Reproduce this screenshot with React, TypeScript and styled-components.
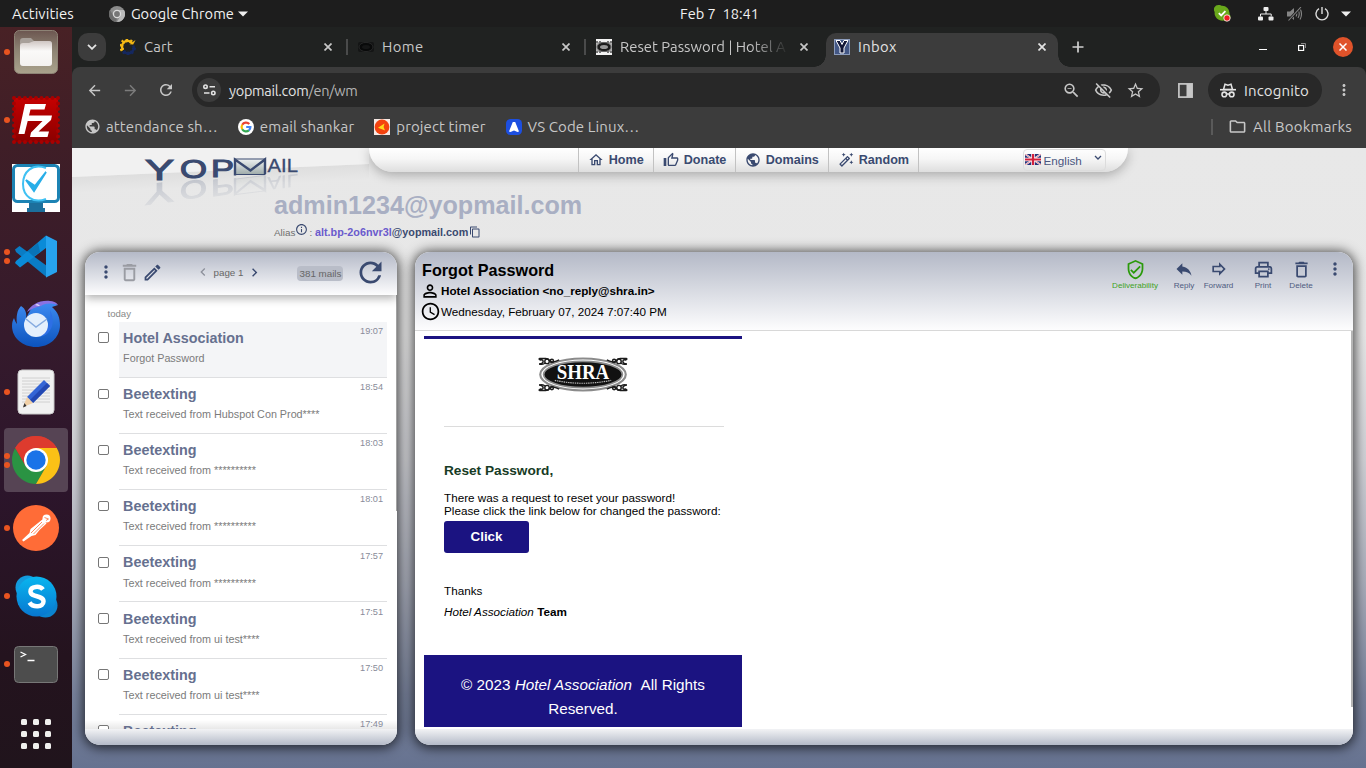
import React from "react";
import styled, { createGlobalStyle, css } from "styled-components";
import {
  MdAccessTime, MdArrowBack, MdArrowForward, MdChevronLeft, MdChevronRight, MdContentCopy,
  MdDeleteOutline, MdInfoOutline, MdMoreVert, MdOutlineAutoFixHigh, MdOutlineEdit,
  MdOutlineFolder, MdOutlineForward, MdOutlineHome, MdOutlinePrint, MdOutlineThumbUp,
  MdOutlineVerifiedUser, MdOutlineVisibilityOff, MdPersonOutline, MdPublic, MdRefresh,
  MdReply, MdStarBorder, MdZoomOut,
} from "react-icons/md";

const NAVY = "#3a4a70";
const SHELL_FONT = `Ubuntu, "Noto Sans", "Open Sans", sans-serif`;
const WEB_FONT = `"Liberation Sans", Arial, sans-serif`;

const GlobalStyle = createGlobalStyle`
  * { box-sizing: border-box; }
  body { margin: 0; overflow: hidden; background: #1d1d1d; }
  svg { display: block; flex: none; }
`;

const Desktop = styled.div`
  width: 1366px;
  height: 768px;
  display: flex;
  flex-direction: column;
  overflow: hidden;
  font-family: ${SHELL_FONT};
`;

/* ---------- system bar ---------- */
const SystemBar = styled.header`
  flex: none;
  height: 27px;
  padding: 0 15px 0 12px;
  display: grid;
  grid-template-columns: 668px auto 1fr;
  align-items: center;
  background: #1d1d1d;
  color: #f2f2f2;
  line-height: 27px;
`;
const SystemLeft = styled.div`
  display: flex;
  align-items: center;
`;
const SystemRight = styled.div`
  display: flex;
  align-items: center;
  justify-content: flex-end;
`;
const ShellText = styled.span<{ $track?: number; $left?: number; $size?: number; $color?: string }>`
  white-space: pre;
  font-size: ${(p) => p.$size ?? 15}px;
  letter-spacing: ${(p) => p.$track ?? 0}px;
  margin-left: ${(p) => p.$left ?? 0}px;
  color: ${(p) => p.$color ?? "inherit"};
`;
const Glyph = styled.span<{ $left?: number; $color?: string }>`
  display: flex;
  flex: none;
  margin-left: ${(p) => p.$left ?? 0}px;
  color: ${(p) => p.$color ?? "inherit"};
`;

/* ---------- dock ---------- */
const Workspace = styled.div`
  flex: 1;
  min-height: 0;
  display: flex;
`;
const Dock = styled.aside`
  width: 72px;
  flex: none;
  display: flex;
  flex-direction: column;
  overflow: hidden;
  background: linear-gradient(180deg, #482125 0%, #3f1e27 16%, #351a2c 42%, #2c152b 62%, #24131e 85%, #20141c 100%);
`;
const DockSlot = styled.div<{ $first?: boolean; $last?: boolean }>`
  height: 68px;
  flex: none;
  padding: 2px 4px;
  display: flex;
  margin-top: ${(p) => (p.$first ? "-9px" : p.$last ? "auto" : "0")};
`;
const DockTile = styled.div<{ $active?: boolean }>`
  position: relative;
  width: 64px;
  height: 64px;
  border-radius: 4px;
  display: flex;
  align-items: center;
  justify-content: center;
  background: ${(p) => (p.$active ? "#564454" : "transparent")};
`;
const RunDots = styled.div`
  position: absolute;
  left: 0;
  top: 0;
  height: 100%;
  display: flex;
  flex-direction: column;
  justify-content: center;
  gap: 3px;
  i { width: 6px; height: 6px; border-radius: 50%; background: #e95420; }
`;

/* ---------- browser ---------- */
const Browser = styled.section`
  flex: 1;
  min-width: 0;
  display: flex;
  flex-direction: column;
  background: #202221;
`;
const TabStrip = styled.div`
  height: 40px;
  flex: none;
  display: flex;
  align-items: center;
  padding-left: 6px;
  background: #202221;
  color: #c7c7c7;
`;
const TabSearch = styled.div`
  width: 28px;
  height: 28px;
  border-radius: 10px;
  background: #3c3c3c;
  display: flex;
  align-items: center;
  justify-content: center;
`;
const TabBox = styled.div<{ $active?: boolean; $rule?: boolean }>`
  position: relative;
  display: flex;
  align-items: center;
  height: 34px;
  align-self: flex-end;
  padding-bottom: 6px;
  width: 238px;
  padding-left: 10px;
  ${(p) => p.$rule && css`
    background: linear-gradient(#4a4b4b, #4a4b4b) 236px 6px / 2px 16px no-repeat;
  `}
  ${(p) => p.$active && css`
    width: 232px;
    padding-left: 8px;
    background: #3c3c3c;
    border-radius: 10px 10px 0 0;
    color: #e3e3e3;
    &::before, &::after {
      content: "";
      position: absolute;
      bottom: 0;
      width: 12px;
      height: 12px;
    }
    &::before { left: -12px; background: radial-gradient(circle at 0 0, transparent 11.5px, #3c3c3c 12px); }
    &::after { right: -12px; background: radial-gradient(circle at 100% 0, transparent 11.5px, #3c3c3c 12px); }
  `}
`;
const TabTitle = styled.span<{ $fade?: boolean; $track?: number }>`
  width: 167px;
  margin-left: 8px;
  margin-bottom: 1px;
  overflow: hidden;
  white-space: nowrap;
  font-size: 14.8px;
  letter-spacing: ${(p) => p.$track ?? 0}px;
  ${(p) => p.$fade && css`
    -webkit-mask-image: linear-gradient(90deg, #000 130px, transparent 169px);
    mask-image: linear-gradient(90deg, #000 130px, transparent 169px);
  `}
`;
const WindowButtons = styled.div`
  margin-left: auto;
  padding-right: 13px;
  display: flex;
  align-items: center;
`;
const CloseWindow = styled.div`
  width: 20px;
  height: 20px;
  margin-left: 27px;
  border-radius: 50%;
  background: #e0532a;
  display: flex;
  align-items: center;
  justify-content: center;
`;
const Chrome = styled.div`
  background: #3c3c3c;
  border-radius: 8px 8px 0 0;
  color: #c7c7c7;
  flex: none;
`;
const Toolbar = styled.div`
  height: 46px;
  padding: 0 0 0 14px;
  display: flex;
  align-items: center;
`;
const Omnibox = styled.div`
  width: 968px;
  height: 34px;
  flex: none;
  margin-left: 17px;
  padding: 0 15px 0 5px;
  border-radius: 17px;
  background: #282828;
  display: flex;
  align-items: center;
`;
const SiteInfo = styled.div`
  width: 24px;
  height: 24px;
  border-radius: 50%;
  background: #3c3c3c;
  display: flex;
  align-items: center;
  justify-content: center;
`;
const OmniActions = styled.div`
  margin-left: auto;
  display: flex;
  align-items: center;
  gap: 13px;
`;
const Incognito = styled.div`
  width: 114px;
  height: 34px;
  flex: none;
  margin-left: 15px;
  padding-left: 12px;
  border-radius: 17px;
  background: #282828;
  color: #e3e3e3;
  display: flex;
  align-items: center;
`;
const Bookmarks = styled.div`
  height: 35px;
  padding: 0 14px 8px 12px;
  display: flex;
  align-items: center;
`;
const BookmarkRule = styled.div`
  width: 2px;
  height: 16px;
  margin-left: auto;
  background: #5a5a5a;
`;

/* ---------- mail page ---------- */
const Page = styled.main`
  position: relative;
  flex: 1;
  min-height: 0;
  overflow: hidden;
  display: flex;
  flex-direction: column;
  font-family: ${WEB_FONT};
  color: #000;
  background: linear-gradient(180deg, #e8e8e8 0%, #e7e7e7 30%, #d0d1d6 50%, #a9adba 70%, #78829b 88%, #667290 100%);
`;
const Sheen = styled.svg`
  position: absolute;
  left: 0;
  top: 0;
`;
const Masthead = styled.div`
  position: relative;
  height: 42px;
  flex: none;
  display: flex;
  align-items: flex-start;
`;
const LogoSlot = styled.div`
  width: 297px;
  height: 42px;
  padding: 6px 0 0 72px;
`;
const Nav = styled.nav`
  width: 759px;
  height: 24px;
  padding: 0 22px 0 209px;
  display: flex;
  align-items: center;
  border-radius: 0 0 26px 26px;
  background: linear-gradient(180deg, #ffffff, #f6f6f6 45%, #dedede);
  box-shadow: 0 3px 12px rgba(0, 0, 0, 0.28);
`;
const NavItem = styled.a<{ $w: number; $last?: boolean }>`
  width: ${(p) => p.$w}px;
  height: 24px;
  display: flex;
  align-items: center;
  padding-left: 9px;
  border-left: 1px solid #c2c2c2;
  border-right: ${(p) => (p.$last ? "1px solid #c2c2c2" : "0")};
  color: ${NAVY};
  font-weight: bold;
  font-size: 12.6px;
  span { margin-left: 4.7px; }
`;
const Language = styled.div`
  width: 83px;
  height: 22px;
  margin-left: auto;
  border: 1px solid #dcdcdc;
  border-radius: 4px;
  display: flex;
  align-items: flex-start;
  padding: 4px 3px 0 1px;
  color: #4a5680;
  font-size: 11.7px;
  line-height: 14px;
  span { margin-left: 2.5px; }
  svg:last-child { margin-left: auto; margin-top: 1px; }
`;
const Account = styled.div`
  position: relative;
  height: 62px;
  flex: none;
  padding-left: 202px;
`;
const Address = styled.h1`
  margin: 0;
  font-size: 25.15px;
  line-height: 31px;
  color: #a9afc3;
`;
const AliasLine = styled.div`
  height: 18px;
  margin-top: 2px;
  display: flex;
  align-items: center;
  color: #6e6e6e;
  font-size: 9.9px;
  white-space: pre;
  b { font-size: 10.8px; color: ${NAVY}; }
  b em { font-style: normal; color: #6a5acd; }
`;
const Superscript = styled.span`
  display: flex;
  margin-right: -1.7px;
  padding-bottom: 5px;
  color: ${NAVY};
`;
const Cards = styled.div`
  position: relative;
  display: flex;
  gap: 18px;
  padding: 0 13px;
`;
const Card = styled.section<{ $w: number }>`
  width: ${(p) => p.$w}px;
  height: 493px;
  display: flex;
  flex-direction: column;
  overflow: hidden;
  border-radius: 15px;
  background: #fff;
  box-shadow: 0 1px 12px 2px rgba(0, 0, 0, 0.68);
`;
const CardFoot = styled.div`
  height: 16px;
  flex: none;
  margin-top: auto;
  background: linear-gradient(180deg, #f2f3f5, #b4bac8);
`;
const ListHead = styled.div`
  position: relative;
  height: 43px;
  flex: none;
  display: flex;
  align-items: center;
  padding: 0 0 3px 12px;
  color: ${NAVY};
  background: linear-gradient(180deg, #b4b9c7, #fdfdfe);
  box-shadow: 0 3px 9px rgba(0, 0, 0, 0.32);
`;
const HeadText = styled.span<{ $pill?: boolean }>`
  flex: none;
  margin: 1px 0 0 2.5px;
  font-size: 9.8px;
  line-height: 14px;
  color: #666;
  white-space: nowrap;
  ${(p) => p.$pill && css`
    width: 46px;
    height: 15px;
    margin: 3px 0 0 34px;
    border-radius: 4px;
    text-align: center;
    line-height: 15px;
    background: #b9bdc8;
  `}
`;
const ListBody = styled.div`
  flex: 1;
  min-height: 0;
  overflow: hidden;
  padding: 13px 10px 0 12px;
  background:
    linear-gradient(0deg, rgba(0, 0, 0, 0.09), transparent 9px),
    linear-gradient(#a2a2a2, #a2a2a2) right top / 1.5px 216px no-repeat;
`;
const DayLabel = styled.div`
  height: 13.85px;
  padding-left: 10.5px;
  font-size: 9.6px;
  line-height: 11px;
  color: #888;
`;
const MailRow = styled.div`
  height: 56.15px;
  display: flex;
`;
const Tick = styled.i`
  width: 10.5px;
  height: 10.5px;
  flex: none;
  margin: 10.6px 0 0 1px;
  border: 1px solid #767676;
  border-radius: 2px;
  background: #fff;
`;
const MailBody = styled.div<{ $selected?: boolean }>`
  width: 267.5px;
  height: 56px;
  flex: none;
  margin-left: 10.6px;
  padding: 8px 3.5px 0 4px;
  border-bottom: 1px solid #dedfe1;
  background: ${(p) => (p.$selected ? "#f4f5f7" : "transparent")};
`;
const MailTop = styled.div`
  display: flex;
  justify-content: space-between;
  b { font-size: 14.35px; line-height: 17px; color: #66708f; }
  span { font-size: 9.2px; line-height: 10px; margin-top: -3.9px; color: #888b99; }
`;
const MailSubject = styled.div`
  margin-top: 5.1px;
  font-size: 10.77px;
  line-height: 13px;
  color: #7b7b7b;
`;

const MessageHead = styled.div`
  height: 79px;
  flex: none;
  display: flex;
  justify-content: space-between;
  padding: 8px 0 0 6px;
  border-bottom: 1px solid #d8d8d8;
  background: linear-gradient(180deg, #b4b9c7, #fdfdfe);
`;
const MessageTitle = styled.h2`
  margin: 0 0 0 1px;
  font-size: 16.2px;
  line-height: 20px;
`;
const MetaLine = styled.div<{ $bold?: boolean }>`
  height: 21px;
  display: flex;
  align-items: center;
  font-size: 11.7px;
  font-weight: ${(p) => (p.$bold ? "bold" : "normal")};
  white-space: nowrap;
  svg { margin-right: ${(p) => (p.$bold ? 1 : 0)}px; margin-left: -1px; }
`;
const Actions = styled.div`
  display: flex;
`;
const Action = styled.div<{ $w: number; $green?: boolean; $end?: boolean }>`
  width: ${(p) => p.$w}px;
  height: 30px;
  padding-left: ${(p) => (p.$end ? 6 : 0)}px;
  display: flex;
  flex-direction: column;
  align-items: center;
  color: ${(p) => (p.$green ? "#2b9a0b" : NAVY)};
  font-size: 8.1px;
  div { height: 18px; display: flex; align-items: center; }
  span { margin-top: 3px; line-height: 9px; color: ${(p) => (p.$green ? "#3fa324" : "#4f5c80")}; }
`;
const MessageBody = styled.div`
  flex: 1;
  min-height: 0;
  padding: 5px 0 0 9px;
  background: linear-gradient(#b5b5b5, #b5b5b5) right top / 2px 376px no-repeat;
`;
const Letter = styled.article`
  width: 318px;
  border-top: 3px solid #1b1381;
  font-size: 11.7px;
  line-height: 13px;
`;
const LetterLogo = styled.div`
  height: 88px;
  margin: 0 18px 0 20px;
  padding: 17.5px 0 0 94px;
  border-bottom: 1px solid #dcdcdc;
`;
const LetterText = styled.div`
  height: 228px;
  padding: 36px 0 0 20px;
  white-space: nowrap;
  h3 { margin: 0; font-size: 13.65px; line-height: 16px; color: #173b25; }
  p { margin: 12px 0 0; }
`;
const ClickButton = styled.div`
  width: 85px;
  height: 32px;
  margin: 4px 0 31px;
  border-radius: 3px;
  background: #1b1381;
  color: #fff;
  font-weight: bold;
  font-size: 13.4px;
  line-height: 31px;
  text-align: center;
`;
const SignOff = styled.div`
  height: 21px;
  line-height: 14px;
`;
const LetterFoot = styled.footer`
  height: 72px;
  padding: 18px 30px 0;
  background: #1b1381;
  color: #fff;
  font-size: 15.25px;
  line-height: 24px;
  text-align: center;
  white-space: pre-line;
`;

/* ---------- drawings ---------- */
const Close = ({ size = 8, w = 1.7 }: { size?: number; w?: number }) => (
  <svg width={size} height={size} viewBox="0 0 8 8" fill="none" stroke="currentColor" strokeWidth={w}>
    <path d="M.5.5l7 7M7.5.5l-7 7" />
  </svg>
);

const ChromeMono = () => (
  <svg width="16" height="16" viewBox="0 0 16 16">
    <circle cx="8" cy="8" r="8" fill="#8b8b8b" />
    <path d="M8 4h7A8 8 0 0 1 8 16l3.4-6z" fill="#b9b9b9" />
    <path d="M1 4l3.5 6L8 12 7 16A8 8 0 0 1 1 4z" fill="#6d6d6d" />
    <circle cx="8" cy="8" r="4.2" fill="#dcdcdc" />
    <circle cx="8" cy="8" r="2.9" fill="#777" />
  </svg>
);
const Caret = () => (
  <svg width="10" height="6" viewBox="0 0 10 6"><path d="M0 .5h10L5 5.5z" fill="#eee" /></svg>
);
const SkypeStatus = () => (
  <svg width="17" height="17" viewBox="0 0 17 17">
    <path d="M4.500 0 a4.500 4.500 0 0 1 3 .7A7.500 7.500 0 0 1 15.500 9a4.500 4.500 0 0 1-6 6.500A7.500 7.500 0 0 1 .7 7 4.500 4.500 0 0 1 4.500 0z" fill="#69a81b" />
    <path d="M4.800 8.200l2.400 2.300 4.200-4.300" fill="none" stroke="#fff" strokeWidth="1.800" />
    <circle cx="13" cy="13" r="3.200" fill="#ed1c24" stroke="#fff" strokeWidth=".8" />
  </svg>
);
const Network = () => (
  <svg width="16" height="14" viewBox="0 0 16 14" fill="#eee">
    <rect x="5.500" y="0" width="5" height="4" rx="1" /><rect x="0" y="9.500" width="5" height="4" rx="1" />
    <rect x="10.500" y="9.500" width="5" height="4" rx="1" />
    <path d="M8 4v3M2.500 9.500V7h10.700v2.500" fill="none" stroke="#eee" />
  </svg>
);
const Muted = () => (
  <svg width="15" height="14" viewBox="0 0 15 14" fill="none" stroke="#858585" strokeWidth="1.100">
    <path d="M0 4.500h3L7 1v12L3 9.500H0z" fill="#858585" stroke="none" />
    <path d="M9 4.500q1.500 2.500 0 5M11 3q2.500 4 0 8M13 1.500q3 5.500 0 11" />
    <path d="M14 0L1 14" stroke="#1d1d1d" strokeWidth="2.600" /><path d="M14 0L1.500 13.500" />
  </svg>
);
const Power = () => (
  <svg width="14" height="14" viewBox="0 0 14 14" fill="none" stroke="#ddd" strokeWidth="1.400">
    <path d="M4 1.700a6 6 0 1 0 6 0M7 0v7" />
  </svg>
);

const CartIcon = () => (
  <svg width="16" height="16" viewBox="0 0 16 16" fill="none">
    <path d="M12 4A5.600 5.600 0 0 0 3.200 11" stroke="#f5b915" strokeWidth="2.400" />
    <path d="M11.500 3.200A5.900 5.900 0 0 0 2.800 11.500" stroke="#f5b915" strokeWidth="4" strokeDasharray="2 2" />
    <path d="M3.500 12A5.600 5.600 0 0 0 13.200 6.500" stroke="#15285f" strokeWidth="2.600" />
    <path d="M3.500 12.500A6 6 0 0 0 13.800 7" stroke="#15285f" strokeWidth="4" strokeDasharray="2 2" />
    <path d="M9.500 5.200L15.500 1l-2.300 4.500z" fill="#f5b915" />
  </svg>
);
const Crest = ({ light }: { light?: boolean }) => (
  <svg width="16" height="16" viewBox="0 0 16 16">
    {light && <rect width="16" height="16" fill="#f4f4f4" />}
    <rect x="0" y="3" width="16" height="10" rx="2" fill={light ? "#aaa" : "#141515"} />
    {light && <path d="M0 3h5M16 3h-5M0 13h5M16 13h-5" stroke="#777" strokeWidth="2" strokeDasharray="2 1" />}
    <ellipse cx="8" cy="8" rx="7" ry="4.600" fill={light ? "#1c1c1c" : "#090a0a"} stroke={light ? "#666" : "#262727"} />
    <ellipse cx="8" cy="8" rx="4" ry="2" fill={light ? "#999" : "#151616"} />
  </svg>
);
const InboxIcon = () => (
  <svg width="16" height="16" viewBox="0 0 16 16">
    <rect width="16" height="16" fill="#8c9cbc" /><rect x="1" y="1" width="14" height="14" fill="#435785" />
    <path d="M2 1.500h4l2 4 2-4h4L10 9v5H6V9z" fill="#121737" stroke="#fff" strokeWidth="1" />
  </svg>
);
const Tune = () => (
  <svg width="13" height="12" viewBox="0 0 13 12" fill="none" stroke="#e3e3e3" strokeWidth="1.600">
    <circle cx="2.500" cy="2.700" r="1.700" /><path d="M6.500 2.700H12M1 9h5.500" /><circle cx="10.300" cy="9" r="1.700" />
  </svg>
);
const SidePanel = () => (
  <svg width="15" height="15" viewBox="0 0 15 15">
    <rect x=".9" y=".9" width="13.200" height="13.200" fill="none" stroke="#c7c7c7" strokeWidth="1.700" />
    <rect x="8.500" y="1" width="5.500" height="13" fill="#c7c7c7" />
  </svg>
);
const Spy = () => (
  <svg width="16" height="15" viewBox="0 0 16 15" fill="none" stroke="#e3e3e3" strokeWidth="1.600">
    <path d="M0 6.700h16" /><path d="M3.500 6.500L5 1.300l3 .9 3-.9 1.500 5.200z" strokeWidth="1.500" />
    <circle cx="4.300" cy="11.400" r="2.300" /><circle cx="11.700" cy="11.400" r="2.300" /><path d="M6.500 11h3" />
  </svg>
);
const GoogleMark = () => (
  <svg width="16" height="16" viewBox="0 0 16 16" fill="none" strokeWidth="2.200">
    <circle cx="8" cy="8" r="8" fill="#fff" />
    <path d="M11.300 5A4.400 4.400 0 0 0 4.200 5.800" stroke="#ea4335" /><path d="M4.200 5.800a4.400 4.400 0 0 0 0 4.400" stroke="#fbbc05" />
    <path d="M4.200 10.200a4.400 4.400 0 0 0 6.700 1.100" stroke="#34a853" /><path d="M10.900 11.300A4.300 4.300 0 0 0 12.400 8H8.200" stroke="#4285f4" />
  </svg>
);
const TimerMark = () => (
  <svg width="16" height="16" viewBox="0 0 16 16">
    <rect width="16" height="16" fill="#f6e9e4" /><circle cx="8" cy="8" r="7.400" fill="#f4430f" />
    <path d="M4 8.800L10.500 4.500 9.600 8l1.400 3.500-3-1.200z" fill="#ffd91a" />
  </svg>
);
const VsMark = () => (
  <svg width="16" height="16" viewBox="0 0 16 16">
    <rect width="16" height="16" rx="4.500" fill="#1d4fe0" />
    <path d="M6.800 3h2.400L13 12.500l-1.500.6L8 11.500l-3.500 1.600-1.500-.6z" fill="#fff" />
  </svg>
);

const FilesIcon = () => (
  <svg width="44" height="44" viewBox="0 0 44 44">
    <defs>
      <linearGradient id="files" x2="0" y2="1"><stop stopColor="#6c5650" /><stop offset=".45" stopColor="#8d8373" /><stop offset="1" stopColor="#aaa28c" /></linearGradient>
      <linearGradient id="folder" x2="0" y2="1"><stop stopColor="#cfc6c3" /><stop offset=".4" stopColor="#faf9f8" /><stop offset="1" stopColor="#f4f2f0" /></linearGradient>
    </defs>
    <rect x=".5" y=".5" width="43" height="43" rx="5" fill="url(#files)" stroke="#8d8375" />
    <path d="M6 11a3 3 0 0 1 3-3h8l3 3h15a3 3 0 0 1 3 3v19a3 3 0 0 1-3 3H9a3 3 0 0 1-3-3z" fill="#a8a09a" />
    <path d="M6 16a3 3 0 0 1 3-3h6l5-2h15a3 3 0 0 1 3 3v19a3 3 0 0 1-3 3H9a3 3 0 0 1-3-3z" fill="url(#folder)" />
  </svg>
);
const FilezillaIcon = () => (
  <svg width="48" height="48" viewBox="0 0 48 48">
    <defs><linearGradient id="fz" x2="0" y2="1"><stop stopColor="#c60000" /><stop offset="1" stopColor="#8a0000" /></linearGradient></defs>
    <path d="M2 2h44v44H2z" fill="url(#fz)" />
    <path d="M2 2h44v44H2z" fill="none" stroke="#a80000" strokeWidth="4" strokeDasharray="0 5.500" strokeLinecap="round" />
    <path d="M13 8h21l-1.500 5.500H18.500l-1.500 6h23l-1 4.500L26.500 35.500H37L35.500 41H18l1-4.500L30.500 25H15.700L12.500 38H6.500z" fill="#fff" />
  </svg>
);
const MonitorIcon = () => (
  <svg width="48" height="48" viewBox="0 0 48 48" fill="none">
    <rect width="48" height="48" fill="#fff" />
    <rect x="1.500" y="1.500" width="45" height="36" rx="4" stroke="#1c83b4" strokeWidth="3" />
    <path d="M17 39h14v5h2v4H15v-4h2z" fill="#1c6f9c" />
    <path d="M34 4C20-1 11 8 11 20s10 20 23 15" stroke="#3fc1f3" strokeWidth="2" />
    <path d="M14 16l8 11L34 8 23 22z" fill="#28aee8" stroke="#28aee8" strokeWidth="2" />
  </svg>
);
const CodeIcon = () => (
  <svg width="43" height="43" viewBox="0 0 43 43">
    <path d="M0 14.500L4.500 11 32 31v11.500L1 17z" fill="#0a7cc4" />
    <path d="M31 .5V13L5 32.500 0 28l1-2z" fill="#0a8bd8" />
    <path d="M12.500 16L23 8l2 9-6.500 4.500z" fill="#0869a8" opacity=".7" />
    <path d="M31 .5l11 5.500v31L31 42.500z" fill="#27a3ef" />
  </svg>
);
const ThunderbirdIcon = () => (
  <svg width="48" height="48" viewBox="0 0 48 48">
    <defs><linearGradient id="tb" x2="0" y2="1"><stop stopColor="#3f8cf2" /><stop offset="1" stopColor="#0c53bd" /></linearGradient></defs>
    <path d="M9 6c5 3 6 8 5 14 2-9 9-18 20-18 5 0 8 1 12 3l-6 2c6 5 8 11 8 18 0 13-11 22-24 22S0 38 0 26c0-4 1-6 2-8 1 3 2 5 3 6C4 17 5 10 9 6z" fill="url(#tb)" />
    <path d="M15 12C19 5 27 0 38 1c3 0 6 1 8 4-9-3-14-1-17 1-5 1-10 3-14 6z" fill="#8a72e2" />
    <path d="M38 10c4 8 4 17-2 23-3 3-7 4-10 3 9-5 14-14 12-26z" fill="#2d6fe5" />
    <circle cx="24" cy="25" r="12" fill="#e4effc" /><path d="M14 19l10 8 11-8" fill="none" stroke="#86abe0" strokeWidth="1.500" />
    <path d="M23 5q3-2 5 1z" fill="#fff" />
  </svg>
);
const EditorIcon = () => (
  <svg width="38" height="46" viewBox="0 0 38 46">
    <rect x="1" y="1" width="36" height="44" rx="4" fill="#f1f1f1" stroke="#c9c9c9" />
    <path d="M5 9h28M5 12h28M5 15h28M5 18h28M5 21h28M5 24h28M5 27h28M5 30h28M5 33h28" stroke="#d0d0d0" />
    <path d="M27 11l6 6-17 17-6-6z" fill="#3465d6" /><path d="M30 14l3 3-17 17-3-3z" fill="#2348b2" />
    <path d="M10 28l6 6-10 4z" fill="#f0cfa6" /><path d="M7.500 34l2 3-3.500 1.500z" fill="#333" />
  </svg>
);
const ChromeIcon = () => (
  <svg width="48" height="48" viewBox="0 0 48 48">
    <path d="M3.220 12A24 24 0 0 1 44.780 12L24 24z" fill="#dd3b2e" />
    <path d="M3.220 12A24 24 0 0 0 24 48l10.400-18L24 24 13.600 30z" fill="#2a9343" />
    <path d="M44.780 12A24 24 0 0 1 24 48l10.400-18L24 12z" fill="#fbc116" />
    <path d="M3.220 12L13.600 30 24 24V12h20.780A24 24 0 0 0 3.220 12z" fill="#dd3b2e" />
    <circle cx="24" cy="24" r="12" fill="#fff" /><circle cx="24" cy="24" r="9.700" fill="#1a73e8" />
  </svg>
);
const PostmanIcon = () => (
  <svg width="46" height="46" viewBox="0 0 46 46">
    <circle cx="23" cy="23" r="23" fill="#ff6c37" />
    <circle cx="33.500" cy="13.500" r="4" fill="#fff" />
    <path d="M30 14l3.500 4.500-7 6.500-4 5-4 1-8 5.500-1.500-1.500 7.500-7 1-4z" fill="#fff" />
    <path d="M29 17L18 28M31 18.500L20.500 29M31.500 12.500l4 1.500-2.500 1.500" stroke="#ff6c37" strokeWidth=".8" fill="none" />
  </svg>
);
const SkypeIcon = () => (
  <svg width="43" height="43" viewBox="0 0 43 43">
    <defs><linearGradient id="sk" x2="0" y2="1"><stop stopColor="#09b6ef" /><stop offset="1" stopColor="#0877d0" /></linearGradient></defs>
    <circle cx="12.500" cy="12.500" r="12" fill="#139bdd" /><circle cx="30.500" cy="30.500" r="12" fill="#0b83cf" />
    <circle cx="21.500" cy="21.500" r="20" fill="url(#sk)" />
    <path d="M28 14.500C25 10.500 15.500 11 15.500 16.500c0 6.500 13 3 13 10 0 6-10.500 6.500-14 1" fill="none" stroke="#fff" strokeWidth="4.500" />
  </svg>
);
const TerminalIcon = () => (
  <svg width="44" height="37" viewBox="0 0 44 37">
    <rect x=".5" y=".5" width="43" height="36" rx="4" fill="#4d4d4d" stroke="#777" />
    <path d="M6.500 6l5 2.500-5 2.500M13.500 14.500h7" fill="none" stroke="#fff" strokeWidth="1.300" />
  </svg>
);
const GridIcon = () => (
  <svg width="30" height="30" viewBox="0 0 30 30" fill="#f0f0ee">
    {[0, 12, 24].map((y) => [0, 12, 24].map((x) => <rect key={`${x}-${y}`} x={x} y={y} width="6" height="6" rx="1.500" />))}
  </svg>
);

const LogoArt = () => (
  <g fontFamily="Liberation Sans, Arial, sans-serif" fill={NAVY} stroke={NAVY}>
    <text x="1" y="26" fontSize="29" strokeWidth="1.100" textLength="29" lengthAdjust="spacingAndGlyphs">Y</text>
    <text x="36" y="24" fontSize="25" strokeWidth="1.100" textLength="27" lengthAdjust="spacingAndGlyphs">O</text>
    <text x="67" y="22.500" fontSize="23.500" strokeWidth="1" textLength="23" lengthAdjust="spacingAndGlyphs">P</text>
    <rect x="91" y="5" width="30" height="15.500" fill="url(#envelope)" strokeWidth="1" />
    <path d="M91 21.500V5.500l15.500 11L121 5.500v14.500" fill="none" strokeWidth="2.400" />
    <text x="123.500" y="18" fontSize="18" strokeWidth=".3" textLength="30.500" lengthAdjust="spacingAndGlyphs">AIL</text>
  </g>
);
const Logo = () => (
  <svg width="160" height="64" viewBox="0 0 160 64">
    <defs>
      <linearGradient id="envelope" x2="0" y2="1"><stop stopColor="#eef1f1" /><stop offset="1" stopColor="#9eabaa" /></linearGradient>
      <linearGradient id="fadeDown" gradientUnits="userSpaceOnUse" x1="0" y1="4" x2="0" y2="28"><stop stopColor="#333" /><stop offset="1" stopColor="#aaa" /></linearGradient>
      <mask id="mirror" maskUnits="userSpaceOnUse" x="0" y="0" width="160" height="34"><rect width="160" height="34" fill="url(#fadeDown)" /></mask>
    </defs>
    <LogoArt />
    <g transform="matrix(1 -.125 0 -1 0 57)" opacity=".32" mask="url(#mirror)"><LogoArt /></g>
  </svg>
);
const Flag = () => (
  <svg width="16" height="11" viewBox="0 0 16 11">
    <rect width="16" height="11" fill="#26337a" />
    <path d="M0 0l16 11M16 0L0 11" stroke="#fff" strokeWidth="1.800" /><path d="M0 0l16 11M16 0L0 11" stroke="#d3203c" strokeWidth=".5" />
    <path d="M8 0v11M0 5.500h16" stroke="#fff" strokeWidth="3.600" /><path d="M8 0v11M0 5.500h16" stroke="#d3203c" strokeWidth="2.200" />
  </svg>
);
const Curl = ({ t }: { t: string }) => (
  <g transform={t} fill="none" stroke="#1c1c1c" strokeWidth="1.500">
    <path d="M1 7.500q4-1 4-3t-3-1.500q-2-1-.5-1.500h6q3 0 4 2t4 1.500 6-2" />
    <circle cx="9" cy="4.500" r="2.300" /><circle cx="14" cy="4" r="1.600" /><path d="M1 7q4 1.500 6-1" />
  </g>
);
const ShraLogo = () => (
  <svg width="90" height="35" viewBox="0 0 92 36">
    <ellipse cx="46" cy="18" rx="44" ry="16.500" fill="#fff" stroke="#8b8b8b" strokeWidth="2.200" />
    <ellipse cx="46" cy="18" rx="40.500" ry="13.500" fill="#111" stroke="#8c8c8c" strokeWidth="1.800" />
    <Curl t="translate(0 0)" /><Curl t="matrix(-1 0 0 1 92 0)" /><Curl t="matrix(1 0 0 -1 0 36)" /><Curl t="matrix(-1 0 0 -1 92 36)" />
    <text x="19" y="22.500" fill="#fff" fontFamily="Liberation Serif, serif" fontWeight="bold" fontSize="21" textLength="54" lengthAdjust="spacingAndGlyphs">SHRA</text>
    <path d="M17 24q28 6 58 0" fill="none" stroke="#bbb" strokeWidth="1.200" strokeDasharray="1.500 .8" />
  </svg>
);

/* ---------- data ---------- */
const dockApps = [
  { icon: <FilesIcon />, dots: 1 }, { icon: <FilezillaIcon />, dots: 1 }, { icon: <MonitorIcon />, dots: 0 },
  { icon: <CodeIcon />, dots: 2 }, { icon: <ThunderbirdIcon />, dots: 0 }, { icon: <EditorIcon />, dots: 1 },
  { icon: <ChromeIcon />, dots: 2, active: true }, { icon: <PostmanIcon />, dots: 1 },
  { icon: <SkypeIcon />, dots: 1 }, { icon: <TerminalIcon />, dots: 1 },
];
const mails = [
  ["Hotel Association", "19:07", "Forgot Password"],
  ["Beetexting", "18:54", "Text received from Hubspot Con Prod****"],
  ["Beetexting", "18:03", "Text received from **********"],
  ["Beetexting", "18:01", "Text received from **********"],
  ["Beetexting", "17:57", "Text received from **********"],
  ["Beetexting", "17:51", "Text received from ui test****"],
  ["Beetexting", "17:50", "Text received from ui test****"],
  ["Beetexting", "17:49", ""],
];

export default function App() {
  return (
    <Desktop>
      <GlobalStyle />
      <SystemBar>
        <SystemLeft>
          <ShellText $size={14.8} $track={0.12}>Activities</ShellText>
          <Glyph $left={35}><ChromeMono /></Glyph>
          <ShellText $left={6} $size={14.6} $track={0.05}>Google Chrome</ShellText>
          <Glyph $left={4}><Caret /></Glyph>
        </SystemLeft>
        <ShellText $size={14.6}>Feb 7  18:41</ShellText>
        <SystemRight>
          <Glyph><SkypeStatus /></Glyph>
          <Glyph $left={27.5}><Network /></Glyph>
          <Glyph $left={13}><Muted /></Glyph>
          <Glyph $left={13}><Power /></Glyph>
          <Glyph $left={12}><Caret /></Glyph>
        </SystemRight>
      </SystemBar>
      <Workspace>
        <Dock>
          {dockApps.map((app, i) => (
            <DockSlot key={i} $first={i === 0}>
              <DockTile $active={app.active}>
                <RunDots>{Array.from({ length: app.dots }, (_, n) => <i key={n} />)}</RunDots>
                {app.icon}
              </DockTile>
            </DockSlot>
          ))}
          <DockSlot $last><DockTile><GridIcon /></DockTile></DockSlot>
        </Dock>
        <Browser>
          <TabStrip>
            <TabSearch>
              <svg width="10" height="6" viewBox="0 0 10 6" fill="none" stroke="#e3e3e3" strokeWidth="1.800"><path d="M1 .8l4 4 4-4" /></svg>
            </TabSearch>
            <Glyph $left={4} />
            <TabBox $rule><CartIcon /><TabTitle $track={0.15}>Cart</TabTitle><Glyph $left={13}><Close /></Glyph></TabBox>
            <TabBox $rule><Crest /><TabTitle $track={0.4}>Home</TabTitle><Glyph $left={13}><Close /></Glyph></TabBox>
            <TabBox><Crest light /><TabTitle $fade $track={0.02}>Reset Password | Hotel A</TabTitle><Glyph $left={13}><Close /></Glyph></TabBox>
            <Glyph $left={2} />
            <TabBox $active><InboxIcon /><TabTitle $track={0.4}>Inbox</TabTitle><Glyph $left={13}><Close /></Glyph></TabBox>
            <Glyph $left={14}>
              <svg width="12" height="12" viewBox="0 0 12 12" stroke="#d0d0d0" strokeWidth="1.700"><path d="M6 .5v11M.5 6h11" /></svg>
            </Glyph>
            <WindowButtons>
              <svg width="8" height="10" viewBox="0 0 8 10"><path d="M0 7.500h8" stroke="#fff" /></svg>
              <Glyph $left={31}>
                <svg width="8" height="8" viewBox="0 0 8 8" fill="none"><path d="M3 .5h4.500V5" stroke="#888" /><rect x=".6" y="2.500" width="5" height="5" stroke="#fff" strokeWidth="1.200" /></svg>
              </Glyph>
              <CloseWindow><Glyph $color="#fff"><Close w={1.5} /></Glyph></CloseWindow>
            </WindowButtons>
          </TabStrip>
          <Chrome>
            <Toolbar>
              <MdArrowBack size={17} />
              <Glyph $left={19} $color="#7c7c7c"><MdArrowForward size={17} /></Glyph>
              <Glyph $left={18}><MdRefresh size={18} /></Glyph>
              <Omnibox>
                <SiteInfo><Tune /></SiteInfo>
                <ShellText $left={8} $size={14.5} $track={-0.27} $color="#e3e3e3">yopmail.com</ShellText>
                <ShellText $size={14.5} $track={-0.25} $color="#b5b5b5">/en/wm</ShellText>
                <OmniActions>
                  <MdZoomOut size={19} /><MdOutlineVisibilityOff size={19} /><MdStarBorder size={19} />
                </OmniActions>
              </Omnibox>
              <Glyph $left={18}><SidePanel /></Glyph>
              <Incognito><Spy /><ShellText $left={8} $track={0.15}>Incognito</ShellText></Incognito>
              <Glyph $left={13}><MdMoreVert size={18} /></Glyph>
            </Toolbar>
            <Bookmarks>
              <MdPublic size={17} />
              <ShellText $left={5} $track={0.13}>attendance sh…</ShellText>
              <Glyph $left={20}><GoogleMark /></Glyph>
              <ShellText $left={6} $track={0.17}>email shankar</ShellText>
              <Glyph $left={20}><TimerMark /></Glyph>
              <ShellText $left={6} $track={0.1}>project timer</ShellText>
              <Glyph $left={20}><VsMark /></Glyph>
              <ShellText $left={6} $track={0.12}>VS Code Linux…</ShellText>
              <BookmarkRule />
              <Glyph $left={15}><MdOutlineFolder size={19} /></Glyph>
              <ShellText $left={6} $track={0.22}>All Bookmarks</ShellText>
            </Bookmarks>
          </Chrome>
          <Page>
            <Sheen width="297" height="60" viewBox="0 0 297 60">
              <defs>
                <linearGradient id="sheenShade" gradientUnits="userSpaceOnUse" x1="0" y1="29" x2=".7" y2="45">
                  <stop stopColor="#dedede" /><stop offset="1" stopColor="#e8e8e8" />
                </linearGradient>
              </defs>
              <path d="M0 29L297 16v17L0 46z" fill="url(#sheenShade)" />
              <path d="M0 0h297v16L0 29z" fill="#f1f1f1" />
            </Sheen>
            <Masthead>
              <LogoSlot><Logo /></LogoSlot>
              <Nav>
                <NavItem $w={75}><MdOutlineHome size={16} /><span>Home</span></NavItem>
                <NavItem $w={82}><MdOutlineThumbUp size={16} /><span>Donate</span></NavItem>
                <NavItem $w={93}><MdPublic size={16} /><span>Domains</span></NavItem>
                <NavItem $w={91} $last><MdOutlineAutoFixHigh size={16} /><span>Random</span></NavItem>
                <Language>
                  <Flag /><span>English</span>
                  <svg width="8" height="6" viewBox="0 0 8 6" fill="none" stroke={NAVY} strokeWidth="1.300"><path d="M1 1l3 3 3-3" /></svg>
                </Language>
              </Nav>
            </Masthead>
            <Account>
              <Address>admin1234@yopmail.com</Address>
              <AliasLine>
                Alias<Superscript><MdInfoOutline size={13} /></Superscript> : <b><em>alt.bp-2o6nvr3l</em>@yopmail.com</b>
                <Glyph $color={NAVY} $left={1}><MdContentCopy size={12} /></Glyph>
              </AliasLine>
            </Account>
            <Cards>
              <Card $w={312}>
                <ListHead>
                  <Glyph $left={-1.5}><MdMoreVert size={20} /></Glyph>
                  <Glyph $left={2} $color="#9a9ca3"><MdDeleteOutline size={23} /></Glyph>
                  <Glyph $left={1.5}><MdOutlineEdit size={21} /></Glyph>
                  <Glyph $left={32} $color="#8d909b"><MdChevronLeft size={16} /></Glyph>
                  <HeadText>page 1</HeadText>
                  <Glyph $left={3}><MdChevronRight size={17} /></Glyph>
                  <HeadText $pill>381 mails</HeadText>
                  <Glyph $left={11}><MdRefresh size={33} /></Glyph>
                </ListHead>
                <ListBody>
                  <DayLabel>today</DayLabel>
                  {mails.map(([from, time, subject], i) => (
                    <MailRow key={time}>
                      <Tick />
                      <MailBody $selected={i === 0}>
                        <MailTop><b>{from}</b><span>{time}</span></MailTop>
                        {subject && <MailSubject>{subject}</MailSubject>}
                      </MailBody>
                    </MailRow>
                  ))}
                </ListBody>
                <CardFoot />
              </Card>
              <Card $w={938}>
                <MessageHead>
                  <div>
                    <MessageTitle>Forgot Password</MessageTitle>
                    <MetaLine $bold><MdPersonOutline size={20} />Hotel Association &lt;no_reply@shra.in&gt;</MetaLine>
                    <MetaLine><MdAccessTime size={21} />Wednesday, February 07, 2024 7:07:40 PM</MetaLine>
                  </div>
                  <Actions>
                    <Action $w={60} $green><div><MdOutlineVerifiedUser size={21} /></div><span>Deliverability</span></Action>
                    <Action $w={38}><div><MdReply size={20} /></div><span>Reply</span></Action>
                    <Action $w={31}><div><MdOutlineForward size={20} /></div><span>Forward</span></Action>
                    <Action $w={58}><div><MdOutlinePrint size={21} /></div><span>Print</span></Action>
                    <Action $w={18}><div><MdDeleteOutline size={21} /></div><span>Delete</span></Action>
                    <Action $w={43} $end><div><MdMoreVert size={20} /></div></Action>
                  </Actions>
                </MessageHead>
                <MessageBody>
                  <Letter>
                    <LetterLogo><ShraLogo /></LetterLogo>
                    <LetterText>
                      <h3>Reset Password,</h3>
                      <p>There was a request to reset your password!<br />Please click the link below for changed the password:</p>
                      <ClickButton>Click</ClickButton>
                      <SignOff>Thanks</SignOff>
                      <SignOff><i>Hotel Association</i> <b>Team</b></SignOff>
                    </LetterText>
                    <LetterFoot>© 2023 <i>Hotel Association</i> &nbsp;All Rights Reserved.</LetterFoot>
                  </Letter>
                </MessageBody>
                <CardFoot />
              </Card>
            </Cards>
          </Page>
        </Browser>
      </Workspace>
    </Desktop>
  );
}
